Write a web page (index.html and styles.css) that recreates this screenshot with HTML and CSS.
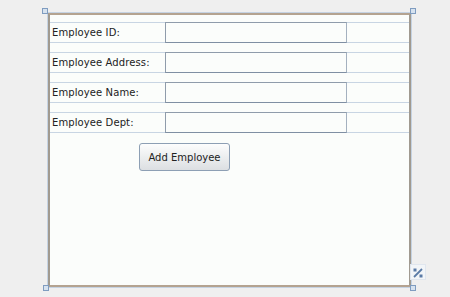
FILE: index.html
```html
<!DOCTYPE html>
<html lang="en">
<head>
    <meta charset="UTF-8">
    <title>Employee Form</title>
    <link rel="stylesheet" href="styles.css">
</head>
<body>

    <div class="frame">

        <span class="handle handle_tl"></span>
        <span class="handle handle_tr"></span>
        <span class="handle handle_bl"></span>
        <span class="handle handle_br"></span>

        <div class="row">
            <label class="label">Employee ID:</label>
            <input class="field" type="text">
        </div>

        <div class="row">
            <label class="label">Employee Address:</label>
            <input class="field" type="text">
        </div>

        <div class="row">
            <label class="label">Employee Name:</label>
            <input class="field" type="text">
        </div>

        <div class="row">
            <label class="label">Employee Dept:</label>
            <input class="field" type="text">
        </div>

        <button class="button_Add">Add Employee</button>

        <div class="resize_icon">
            <svg width="14" height="14" viewBox="0 0 14 14">
                <rect x="2.5" y="2.5" width="3" height="3" fill="#5a7ba6"/>
                <rect x="8.5" y="8.5" width="3" height="3" fill="#5a7ba6"/>
                <path d="M11 3 L3 11" stroke="#5a7ba6" stroke-width="1.8"/>
            </svg>
        </div>

    </div>

</body>
</html>
```

FILE: styles.css
```css
body{
    margin: 0;
    width: 450px;
    height: 297px;
    background-color: #efefef;
    font-family: "DejaVu Sans", Verdana, sans-serif;
    overflow: hidden;
    padding-top: 13px;
    box-sizing: border-box;
}

.frame{
    position: relative;
    margin-left: 48px;
    width: 363px;
    height: 274px;
    box-sizing: border-box;
    background-color: #fbfdfb;
    border: 2px solid #b4a390;
    border-left-color: #a09a90;
    border-right-color: #a09a90;
    padding-top: 7px;
    outline: 1px solid #c5d3e3;
}

.row{
    display: flex;
    align-items: center;
    height: 19px;
    border-top: 1px solid #c8d5e3;
    border-bottom: 1px solid #c8d5e3;
    margin-bottom: 9px;
}

.label{
    width: 113px;
    padding-left: 2px;
    font-size: 10px;
    letter-spacing: 0.1px;
    color: #222;
}

.field{
    width: 182px;
    height: 21px;
    margin: -1px 0;
    box-sizing: border-box;
    border: 1px solid #a4b1bf;
    border-top-color: #8f9cab;
    border-left-color: #8f9cab;
    border-bottom-color: #7f8fa3;
    background-color: #fbfdfb;
    padding: 0;
}

.button_Add{
    margin: 1px 0 0 89px;
    width: 91px;
    height: 28px;
    font-family: "DejaVu Sans", Verdana, sans-serif;
    font-size: 10px;
    color: #222;
    border: 1px solid #8d9fb4;
    border-radius: 3px;
    background: linear-gradient(#fdfdfd, #eceeef 50%, #dcdfe2);
}

.handle{
    position: absolute;
    width: 4px;
    height: 4px;
    border: 1px solid #7f9cc0;
    background-color: #d6e2ef;
}

.handle_tl{
    left: -8px;
    top: -7px;
}

.handle_tr{
    right: -7px;
    top: -7px;
}

.handle_bl{
    left: -7px;
    bottom: -6px;
}

.handle_br{
    right: -7px;
    bottom: -6px;
}

.resize_icon{
    position: absolute;
    right: -17px;
    bottom: 5px;
    width: 14px;
    height: 14px;
    background-color: #f2f5f8;
    border: 1px solid #e0e6ee;
}
```
